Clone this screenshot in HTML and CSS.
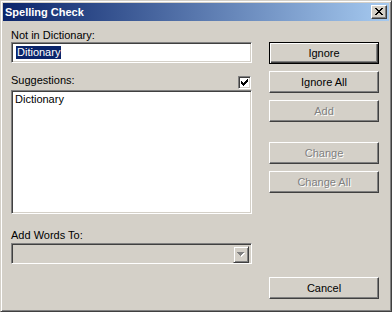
FILE: index.html
```html
<!DOCTYPE html>
<html lang="en">

<head>
    <meta charset="UTF-8">
    <title>Spelling Check</title>
    <link rel="stylesheet" href="styles.css">
</head>

<body>
    <div class="window">
        <div class="titlebar">
            <span class="title">Spelling Check</span>
            <div class="close">
                <svg width="8" height="7" viewBox="0 0 8 7">
                    <path d="M0 0h2v1H0zM6 0h2v1H6zM1 1h2v1H1zM5 1h2v1H5zM2 2h4v1H2zM3 3h2v1H3zM2 4h4v1H2zM1 5h2v1H1zM5 5h2v1H5zM0 6h2v1H0zM6 6h2v1H6z" fill="#000" />
                </svg>
            </div>
        </div>
        <div class="content">
            <div class="left">
                <div class="label">Not in Dictionary:</div>
                <div class="field">
                    <span class="sel">Ditionary</span>
                </div>
                <div class="row">
                    <div class="label">Suggestions:</div>
                    <div class="check">
                        <svg width="7" height="7" viewBox="0 0 7 7">
                            <path d="M6 0h1v1H6zM5 1h2v1H5zM0 2h1v1H0zM4 2h3v1H4zM0 3h2v1H0zM3 3h3v1H3zM0 4h5v1H0zM1 5h3v1H1zM2 6h1v1H2z" fill="#000" />
                        </svg>
                    </div>
                </div>
                <div class="list">
                    <div class="item">Dictionary</div>
                </div>
                <div class="label words">Add Words To:</div>
                <div class="combo">
                    <div class="drop">
                        <svg width="8" height="5" viewBox="0 0 8 5">
                            <path d="M1 1h7v1H1zM2 2h5v1H2zM3 3h3v1H3zM4 4h1v1H4z" fill="#fff" />
                            <path d="M0 0h7v1H0zM1 1h5v1H1zM2 2h3v1H2zM3 3h1v1H3z" fill="#808080" />
                        </svg>
                    </div>
                </div>
            </div>
            <div class="right">
                <div class="btn default">Ignore</div>
                <div class="btn">Ignore All</div>
                <div class="btn off">Add</div>
                <div class="btn off sep">Change</div>
                <div class="btn off">Change All</div>
                <div class="btn cancel">Cancel</div>
            </div>
        </div>
    </div>
</body>

</html>
```

FILE: styles.css
```css
body {
    margin: 0;
    padding: 0;
}

.window {
    width: 392px;
    height: 312px;
    box-sizing: border-box;
    background-color: #d4d0c8;
    border: 1px solid;
    border-color: #d4d0c8 #404040 #404040 #d4d0c8;
    box-shadow: inset 1px 1px #fff, inset -1px -1px #808080;
    padding: 2px;
    font-family: "Liberation Sans", Arial, sans-serif;
    font-size: 11px;
    color: #000;
}

.titlebar {
    height: 18px;
    display: flex;
    align-items: center;
    justify-content: space-between;
    background: linear-gradient(to right, #0a246a, #a6caf0);
}

.title {
    color: #fff;
    font-weight: bold;
    line-height: 18px;
    padding-left: 2px;
}

.close {
    width: 16px;
    height: 14px;
    box-sizing: border-box;
    margin-right: 2px;
    background-color: #d4d0c8;
    border: 1px solid;
    border-color: #fff #404040 #404040 #fff;
    box-shadow: inset -1px -1px #808080;
    display: flex;
    justify-content: center;
    align-items: center;
    padding: 0 0 1px 0;
}

.close svg {
    display: block;
    margin-left: -1px;
}

.content {
    display: flex;
    gap: 17px;
    padding: 8px 10px 0 8px;
}

.left {
    width: 241px;
}

.label {
    line-height: 13px;
    height: 13px;
}

.field,
.list,
.combo {
    box-sizing: border-box;
    border: 1px solid;
    border-color: #808080 #fff #fff #808080;
    box-shadow: inset 1px 1px #404040, inset -1px -1px #d4d0c8;
    background-color: #fff;
}

.field {
    height: 21px;
    padding: 3px 0 0 4px;
}

.sel {
    display: inline-block;
    background-color: #0a246a;
    color: #fff;
    line-height: 13px;
    padding: 0 1px;
}

.row {
    display: flex;
    justify-content: space-between;
    margin-top: 11px;
    height: 16px;
}

.check {
    width: 13px;
    height: 13px;
    box-sizing: border-box;
    margin: 2px 1px 0 0;
    border: 1px solid;
    border-color: #808080 #fff #fff #808080;
    box-shadow: inset 1px 1px #404040, inset -1px -1px #d4d0c8;
    background-color: #fff;
    padding: 2px 0 0 2px;
}

.check svg {
    display: block;
}

.list {
    height: 124px;
    padding: 2px 3px;
}

.item {
    line-height: 13px;
}

.words {
    margin-top: 15px;
}

.combo {
    height: 21px;
    margin-top: 1px;
    background-color: #d4d0c8;
    display: flex;
    justify-content: flex-end;
    padding: 2px;
}

.drop {
    width: 16px;
    height: 17px;
    box-sizing: border-box;
    border: 1px solid;
    border-color: #d4d0c8 #404040 #404040 #d4d0c8;
    box-shadow: inset 1px 1px #fff, inset -1px -1px #808080;
    display: flex;
    justify-content: center;
    align-items: center;
}

.right {
    width: 110px;
    padding-top: 13px;
    display: flex;
    flex-direction: column;
    gap: 7px;
}

.btn {
    height: 22px;
    box-sizing: border-box;
    border: 1px solid;
    border-color: #fff #404040 #404040 #fff;
    box-shadow: inset -1px -1px #808080;
    text-align: center;
    line-height: 20px;
}

.btn.default {
    border-color: #000;
    box-shadow: inset 1px 1px #fff, inset -1px -1px #404040, inset -2px -2px #808080;
}

.btn.off {
    color: #808080;
    text-shadow: 1px 1px #fff;
}

.btn.sep {
    margin-top: 13px;
}

.btn.cancel {
    margin-top: 77px;
}
```
